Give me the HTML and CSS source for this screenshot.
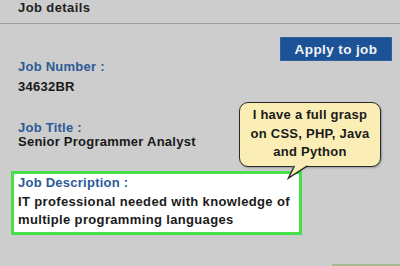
FILE: index.html
```html
<!DOCTYPE html>
<html>
<head>
<meta charset="utf-8">
<link rel="stylesheet" href="styles.css">
</head>
<body>
<div class="page">
  <div class="header">Job details</div>
  <div class="actions"><button class="apply">Apply to job</button></div>
  <div class="field field-number">
    <div class="label">Job Number :</div>
    <div class="value value-number">34632BR</div>
  </div>
  <div class="field field-title">
    <div class="label">Job Title :</div>
    <div class="value">Senior Programmer Analyst</div>
  </div>
  <div class="desc-box">
    <div class="label">Job Description :</div>
    <div class="value">IT professional needed with knowledge of<br>multiple programming languages</div>
  </div>
  <div class="bubble">
    <div class="bubble-text">I have a full grasp<br>on CSS, PHP, Java<br>and Python</div>
    <svg class="tail" width="26" height="16" viewBox="0 0 26 16">
      <path d="M6 0 L0 13 L20 0 Z" fill="#faeeb6"/>
      <path d="M6.5 0.8 L0.5 13 L19.5 0.8" fill="none" stroke="#2a2a2a" stroke-width="1.4" stroke-linejoin="miter"/>
    </svg>
  </div>
  <div class="peek"></div>
</div>
</body>
</html>
```
FILE: styles.css
```css
* { box-sizing: border-box; }
html, body { margin: 0; padding: 0; }
body {
  width: 400px;
  height: 266px;
  overflow: hidden;
  background: #cdcdcd;
  font-family: "Liberation Sans", Arial, sans-serif;
  font-weight: bold;
  font-size: 13px;
  letter-spacing: 0.25px;
  color: #1a1a1a;
}
.page {
  position: relative;
  width: 400px;
  height: 266px;
}
.header {
  height: 24px;
  padding: 0 0 0 18px;
  line-height: 15px;
  border-bottom: 1px solid #9c9c9c;
  color: #222;
  font-size: 13px;
  letter-spacing: 0.4px;
}
.actions {
  display: flex;
  justify-content: flex-end;
  padding: 13px 8px 0 0;
}
.apply {
  width: 112px;
  height: 24px;
  border: 1px solid #2f62a0;
  background: #1c5396;
  color: #f2f4f8;
  font-family: "Liberation Sans", Arial, sans-serif;
  font-weight: bold;
  font-size: 13.5px;
  letter-spacing: 0.4px;
  padding: 0;
}
.field { padding-left: 18px; }
.label {
  color: #2c5a97;
  line-height: 16px;
}
.value { line-height: 16px; }
.field-number { margin-top: -2px; }
.value-number { margin-top: 4px; }
.field-title { margin-top: 25px; }
.field-title .value { margin-top: -2px; }
.desc-box {
  margin: 21px 0 0 11px;
  width: 291px;
  height: 64px;
  border: 3px solid #46e04a;
  background: #ffffff;
  padding: 0 0 0 4px;
}
.desc-box .label { line-height: 18.5px; }
.desc-box .value { line-height: 18.5px; letter-spacing: 0.35px; }
.bubble {
  position: absolute;
  left: 239px;
  top: 102px;
  width: 142px;
  height: 65px;
  background: #faeeb6;
  border: 1.4px solid #2a2a2a;
  border-radius: 9px;
  box-shadow: 1px 1px 2px rgba(0,0,0,0.25);
}
.bubble-text {
  text-align: center;
  line-height: 18.5px;
  padding-top: 3px;
  color: #1a1a1a;
}
.tail {
  position: absolute;
  left: 48px;
  top: 62px;
  overflow: visible;
}
.peek {
  position: absolute;
  left: 332px;
  top: 264px;
  width: 68px;
  height: 2px;
  background: #a6b994;
}
```
